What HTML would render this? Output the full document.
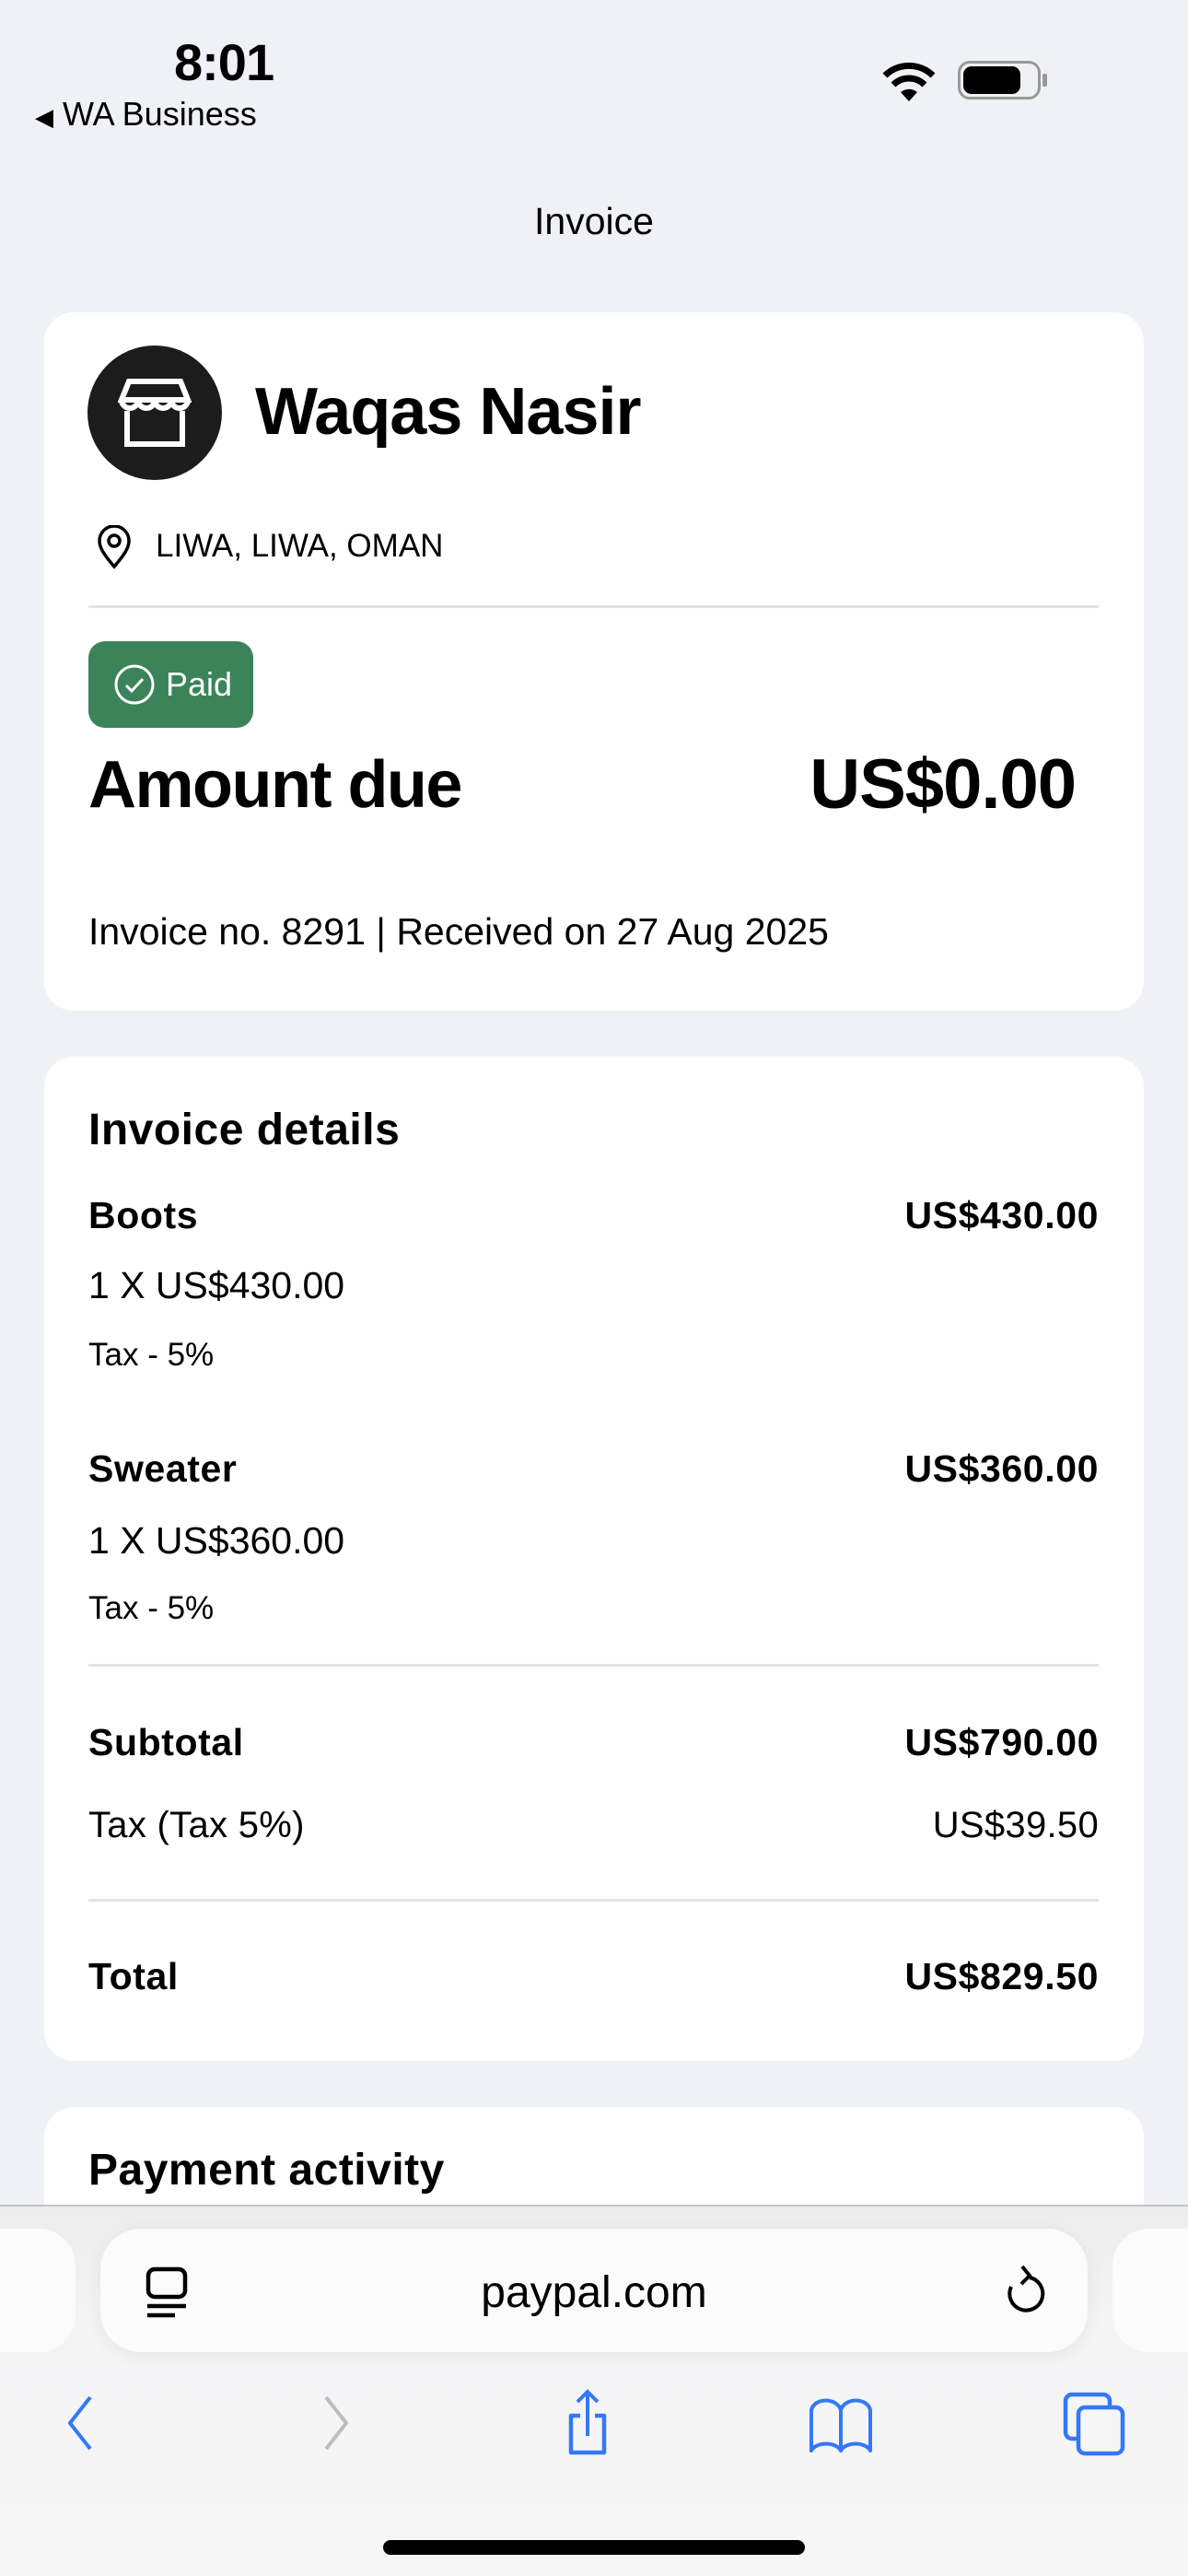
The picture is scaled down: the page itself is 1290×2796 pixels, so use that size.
<!DOCTYPE html>
<html><head><meta charset="utf-8">
<style>
*{margin:0;padding:0;box-sizing:border-box}
body{width:1290px;height:2796px;background:#f0f1f6;font-family:"Liberation Sans",sans-serif;color:#000;position:relative;overflow:hidden}
.a{position:absolute;white-space:nowrap;line-height:1}
.card{position:absolute;left:48px;width:1194px;background:#fff;border-radius:32px}
.hr{position:absolute;left:96px;width:1097px;height:3px;background:#e4e4e6}
.b{font-weight:bold}
.r{text-align:right;right:97px}
.m{font-size:41px;letter-spacing:0.6px}
</style></head><body>
<div class="a b" style="left:189px;top:40px;font-size:56px;letter-spacing:-1px">8:01</div>
<div class="a" style="left:38px;top:106px;font-size:36px"><span style="font-size:26px">◀</span> WA Business</div>
<svg class="a" style="left:956px;top:66px" width="62" height="44" viewBox="0 0 62 44"><path d="M31 44 L22 34 A14 14 0 0 1 40 34 Z" fill="#000"/><path d="M14 26 A24 24 0 0 1 48 26" stroke="#000" stroke-width="7" fill="none"/><path d="M5 16 A37 37 0 0 1 57 16" stroke="#000" stroke-width="7" fill="none"/></svg>
<div class="a" style="left:1040px;top:66px;width:90px;height:42px;border:3px solid #999;border-radius:13px"></div>
<div class="a" style="left:1046px;top:72px;width:62px;height:30px;background:#000;border-radius:9px"></div>
<div class="a" style="left:1132px;top:80px;width:5px;height:14px;background:#999;border-radius:2px"></div>
<div class="a" style="left:0;width:1290px;text-align:center;top:220px;font-size:41px">Invoice</div>

<div class="card" style="top:339px;height:758px"></div>
<div class="a" style="left:95px;top:375px;width:146px;height:146px;border-radius:50%;background:#1c1c1c"></div>
<svg class="a" style="left:128px;top:410px" width="80" height="76" viewBox="0 0 80 76"><g fill="none" stroke="#fff" stroke-width="6"><path d="M12 4 H68 L76 24 H4 Z"/><path d="M4 24 A9 9 0 0 0 22 24 A9 9 0 0 0 40 24 A9 9 0 0 0 58 24 A9 9 0 0 0 76 24"/><path d="M10 36 V72 H70 V36"/></g></svg>
<div class="a b" style="left:277px;top:411px;font-size:72px;letter-spacing:-1px">Waqas Nasir</div>
<svg class="a" style="left:104px;top:570px" width="40" height="48" viewBox="0 0 40 48"><path d="M20 45 C8 31 4 24 4 17 A16 16 0 0 1 36 17 C36 24 32 31 20 45 Z" fill="none" stroke="#000" stroke-width="3.5"/><circle cx="20" cy="17" r="6" fill="none" stroke="#000" stroke-width="3.5"/></svg>
<div class="a" style="left:169px;top:575px;font-size:35px">LIWA, LIWA, OMAN</div>
<div class="hr" style="top:657px"></div>
<div class="a" style="left:96px;top:696px;width:179px;height:94px;background:#3b845a;border-radius:18px"></div>
<svg class="a" style="left:123px;top:720px" width="46" height="46" viewBox="0 0 46 46"><circle cx="23" cy="23" r="20" fill="none" stroke="#fff" stroke-width="3"/><path d="M14 24 L20 30 L32 17" fill="none" stroke="#fff" stroke-width="3"/></svg>
<div class="a" style="left:180px;top:725px;font-size:36px;color:#fff">Paid</div>
<div class="a b" style="left:96px;top:816px;font-size:72px;letter-spacing:-1.5px">Amount due</div>
<div class="a b" style="right:122px;top:814px;font-size:76px;letter-spacing:-1px">US$0.00</div>
<div class="a" style="left:96px;top:991px;font-size:41px;letter-spacing:0px">Invoice no. 8291 | Received on 27 Aug 2025</div>

<div class="card" style="top:1147px;height:1090px"></div>
<div class="a b" style="left:96px;top:1203px;font-size:48px;letter-spacing:0.5px">Invoice details</div>
<div class="a b m" style="left:96px;top:1299px">Boots</div>
<div class="a b r m" style="top:1299px">US$430.00</div>
<div class="a" style="left:96px;top:1375px;font-size:41px;letter-spacing:0px">1 X US$430.00</div>
<div class="a" style="left:96px;top:1453px;font-size:35px;letter-spacing:0px">Tax - 5%</div>
<div class="a b m" style="left:96px;top:1574px">Sweater</div>
<div class="a b r m" style="top:1574px">US$360.00</div>
<div class="a" style="left:96px;top:1652px;font-size:41px;letter-spacing:0px">1 X US$360.00</div>
<div class="a" style="left:96px;top:1728px;font-size:35px;letter-spacing:0px">Tax - 5%</div>
<div class="hr" style="top:1806px"></div>
<div class="a b m" style="left:96px;top:1871px">Subtotal</div>
<div class="a b r m" style="top:1871px">US$790.00</div>
<div class="a" style="left:96px;top:1961px;font-size:40px;letter-spacing:0.3px">Tax (Tax 5%)</div>
<div class="a r" style="top:1961px;font-size:40px;letter-spacing:0.3px">US$39.50</div>
<div class="hr" style="top:2061px"></div>
<div class="a b m" style="left:96px;top:2125px">Total</div>
<div class="a b r m" style="top:2125px">US$829.50</div>

<div class="card" style="top:2287px;height:200px"></div>
<div class="a b" style="left:96px;top:2332px;font-size:48px;letter-spacing:0.5px">Payment activity</div>

<div class="a" style="left:0;top:2393px;width:1290px;height:403px;background:linear-gradient(#ececec,#f4f4f5 30%,#f6f6f7);border-top:2px solid #c4c4c6"></div>
<div class="a" style="left:-40px;top:2419px;width:122px;height:134px;background:#fbfbfb;border-radius:40px"></div>
<div class="a" style="left:1208px;top:2419px;width:140px;height:134px;background:#fbfbfb;border-radius:40px"></div>
<div class="a" style="left:109px;top:2419px;width:1072px;height:134px;background:#fbfbfb;border-radius:44px;box-shadow:0 4px 20px rgba(0,0,0,0.06)"></div>
<svg class="a" style="left:158px;top:2460px" width="50" height="56" viewBox="0 0 50 56"><rect x="3" y="3" width="40" height="30" rx="7" fill="none" stroke="#000" stroke-width="4.5"/><path d="M2 43 H44 M2 53 H32" stroke="#000" stroke-width="4.5"/></svg>
<div class="a" style="left:0;width:1290px;text-align:center;top:2465px;font-size:48px">paypal.com</div>
<svg class="a" style="left:1090px;top:2456px" width="46" height="60" viewBox="0 0 46 60"><path d="M28 16 A18 18 0 1 1 8 26" fill="none" stroke="#000" stroke-width="4"/><path d="M20 4 L28 14 L19 23" fill="none" stroke="#000" stroke-width="4"/></svg>
<svg class="a" style="left:68px;top:2600px" width="40" height="60" viewBox="0 0 40 60"><path d="M30 2 L8 30 L30 58" fill="none" stroke="#3478f6" stroke-width="4" stroke-linejoin="round"/></svg>
<svg class="a" style="left:346px;top:2600px" width="40" height="60" viewBox="0 0 40 60"><path d="M8 2 L30 30 L8 58" fill="none" stroke="#bdbdbf" stroke-width="4" stroke-linejoin="round"/></svg>
<svg class="a" style="left:608px;top:2592px" width="60" height="74" viewBox="0 0 60 74"><path d="M30 4 V52 M19 15 L30 4 L41 15" fill="none" stroke="#3478f6" stroke-width="4"/><path d="M22 30 H12 V70 H48 V30 H38" fill="none" stroke="#3478f6" stroke-width="4.5" stroke-linejoin="round"/></svg>
<svg class="a" style="left:876px;top:2600px" width="74" height="64" viewBox="0 0 74 64"><path d="M37 16 C33 2 8 2 5 16 V60 C10 50 32 50 37 60 C42 50 64 50 69 60 V16 C66 2 41 2 37 16 V60" fill="none" stroke="#3478f6" stroke-width="4" stroke-linejoin="round"/></svg>
<svg class="a" style="left:1153px;top:2595px" width="70" height="72" viewBox="0 0 70 72"><rect x="4" y="4" width="48" height="48" rx="7" fill="none" stroke="#3478f6" stroke-width="4.5"/><rect x="18" y="18" width="48" height="50" rx="7" fill="#f6f6f7" stroke="#3478f6" stroke-width="4.5"/></svg>
<div class="a" style="left:416px;top:2757px;width:458px;height:16px;background:#000;border-radius:8px"></div>
</body></html>
